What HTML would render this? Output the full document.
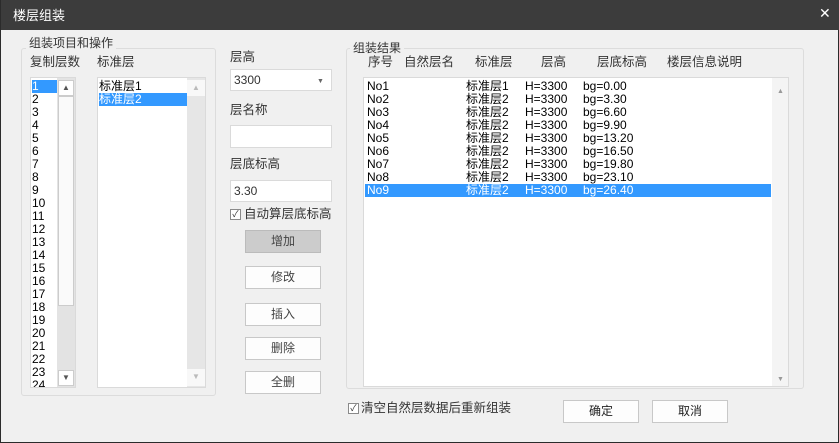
<!DOCTYPE html>
<html><head><meta charset="utf-8"><style>
*{box-sizing:border-box;margin:0;padding:0}
body{width:839px;height:443px;background:#fff;font-family:"Liberation Sans","Noto Sans CJK SC",sans-serif;font-size:12px;color:#000;overflow:hidden;position:relative}
.win{position:absolute;left:0;top:0;width:839px;height:443px;background:#f0f0f0;border:1px solid #2b2b2b;border-top:none}
.title{position:absolute;left:0;top:0;width:839px;height:30px;background:#3c3c3c;color:#fff;font-size:13px}
.a{position:absolute;white-space:nowrap;line-height:13px}
.grp{position:absolute;border:1px solid #dcdcdc;border-radius:3px}
.leg{position:absolute;background:#f0f0f0;padding:0 3px;color:#333;line-height:14px}
.box{position:absolute;background:#fff;border:1px solid #dadada}
.btn{position:absolute;width:76px;height:23px;border:1px solid #c8c8c8;background:#fdfdfd;text-align:center;line-height:21px;color:#444}
.sel{background:#3399ff;color:#fff}
.chk{position:absolute;width:11px;height:11px;border:1px solid #8a8a8a;background:#fff;font-size:9px;line-height:9px;text-align:center;color:#333}
.lbl{color:#333;font-size:12.5px}
</style></head><body>
<div class="win">
<div class="title"><span class="a" style="left:12px;top:9px;font-size:13px">楼层组装</span><span class="a" style="left:818px;top:7px;font-size:14px">✕</span></div>

<div class="grp" style="left:20px;top:48px;width:195px;height:348px"></div>
<div class="leg" style="left:25px;top:36px">组装项目和操作</div>
<div class="a lbl" style="left:29px;top:56px">复制层数</div>
<div class="a lbl" style="left:96px;top:56px">标准层</div>

<div class="box" style="left:29px;top:77px;width:46px;height:311px;overflow:hidden">
<div style="position:absolute;left:1px;top:2px;width:25px;line-height:13px">
<div class="sel">1</div><div>2</div><div>3</div><div>4</div><div>5</div><div>6</div><div>7</div><div>8</div><div>9</div><div>10</div><div>11</div><div>12</div><div>13</div><div>14</div><div>15</div><div>16</div><div>17</div><div>18</div><div>19</div><div>20</div><div>21</div><div>22</div><div>23</div><div>24</div></div>
<div style="position:absolute;left:26px;top:0;width:18px;height:309px;background:#e3e3e3"></div>
<div style="position:absolute;left:27px;top:2px;width:16px;height:16px;background:#fff;border:1px solid #ccc;font-size:8px;text-align:center;line-height:14px;color:#555">▲</div>
<div style="position:absolute;left:27px;top:18px;width:16px;height:210px;background:#fafafa;border:1px solid #ccc"></div>
<div style="position:absolute;left:27px;top:292px;width:16px;height:16px;background:#fff;border:1px solid #ccc;font-size:8px;text-align:center;line-height:14px;color:#555">▼</div>
</div>

<div class="box" style="left:96px;top:77px;width:109px;height:311px">
<div style="position:absolute;left:1px;top:2px;width:89px;line-height:13px">
<div>标准层1</div><div class="sel">标准层2</div></div>
<div style="position:absolute;left:89px;top:0;width:18px;height:309px;background:#e6e6e6"></div>
<div style="position:absolute;left:89px;top:2px;width:18px;height:16px;background:#f8f8f8;font-size:8px;text-align:center;line-height:16px;color:#bbb">▲</div>
<div style="position:absolute;left:89px;top:291px;width:18px;height:17px;background:#f8f8f8;font-size:8px;text-align:center;line-height:16px;color:#bbb">▼</div>
</div>

<div class="a lbl" style="left:229px;top:51px">层高</div>
<div class="box" style="left:229px;top:69px;width:102px;height:22px"><span class="a" style="left:3px;top:4px;color:#333">3300</span><span class="a" style="left:86px;top:5px;font-size:7px;color:#666">▼</span></div>
<div class="a lbl" style="left:229px;top:104px">层名称</div>
<div class="box" style="left:229px;top:125px;width:102px;height:23px"></div>
<div class="a lbl" style="left:229px;top:158px">层底标高</div>
<div class="box" style="left:229px;top:180px;width:102px;height:22px"><span class="a" style="left:3px;top:4px;color:#333">3.30</span></div>
<div class="chk" style="left:229px;top:209px">✓</div>
<div class="a lbl" style="left:243px;top:208px">自动算层底标高</div>

<div class="btn" style="left:244px;top:230px;background:#cccccc;border-color:#bbb">增加</div>
<div class="btn" style="left:244px;top:266px">修改</div>
<div class="btn" style="left:244px;top:303px">插入</div>
<div class="btn" style="left:244px;top:337px">删除</div>
<div class="btn" style="left:244px;top:371px">全删</div>

<div class="grp" style="left:345px;top:48px;width:458px;height:341px"></div>
<div class="leg" style="left:349px;top:41px">组装结果</div>
<div class="a lbl" style="left:367px;top:56px">序号</div>
<div class="a lbl" style="left:403px;top:56px">自然层名</div>
<div class="a lbl" style="left:474px;top:56px">标准层</div>
<div class="a lbl" style="left:540px;top:56px">层高</div>
<div class="a lbl" style="left:596px;top:56px">层底标高</div>
<div class="a lbl" style="left:666px;top:56px">楼层信息说明</div>

<div class="box" style="left:362px;top:77px;width:426px;height:310px">
<div id="rows" style="position:absolute;left:1px;top:2px;width:406px"></div>
<div style="position:absolute;left:408px;top:0;width:16px;height:308px;background:#f4f4f4"></div>
<span class="a" style="left:413px;top:7px;font-size:7px;color:#999">▲</span>
<span class="a" style="left:413px;top:295px;font-size:7px;color:#999">▼</span>
</div>

<div class="chk" style="left:347px;top:403px">✓</div>
<div class="a lbl" style="left:360px;top:402px">清空自然层数据后重新组装</div>
<div class="btn" style="left:562px;top:400px;color:#222">确定</div>
<div class="btn" style="left:651px;top:400px;color:#222">取消</div>
</div>
<script>
var bg=["0.00","3.30","6.60","9.90","13.20","16.50","19.80","23.10","26.40"],h="";
for(var i=0;i<9;i++){h+='<div style="position:relative;height:13px;line-height:13px" class="'+(i==8?'sel':'')+'"><span class="a" style="left:2px;top:0">No'+(i+1)+'</span><span class="a" style="left:101px;top:0">标准层'+(i==0?1:2)+'</span><span class="a" style="left:160px;top:0">H=3300</span><span class="a" style="left:218px;top:0">bg='+bg[i]+'</span></div>';}
document.getElementById('rows').innerHTML=h;
</script>
</body></html>
